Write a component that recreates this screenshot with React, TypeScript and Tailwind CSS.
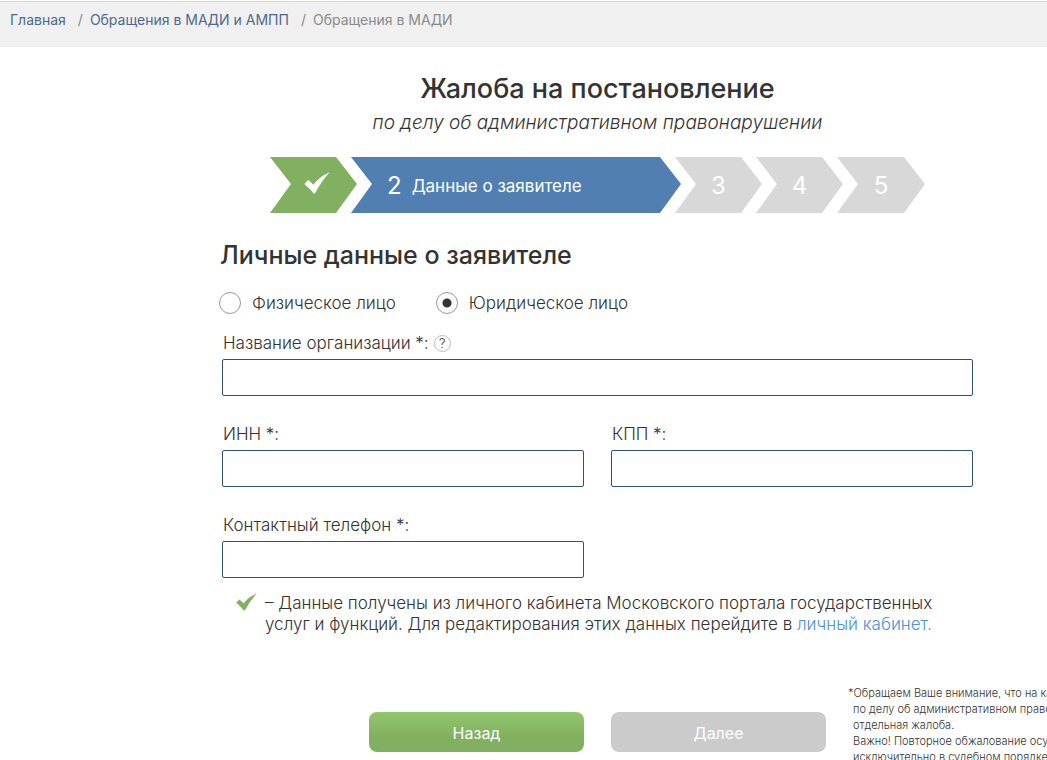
import { useState } from "react";
import type { ReactNode } from "react";

function CheckMark({ className }: { className: string }) {
  return (
    <svg viewBox="0 0 26 22" className={className} fill="currentColor" aria-hidden="true">
      <path d="M0.300 12 L4 8 Q7 9.800 9.300 12.800 Q15.500 4.500 25.700 0.300 Q17.500 9 11 21.500 L9.600 21.500 Q6 16.500 0.300 12 Z" />
    </svg>
  );
}

function Step({ className, children }: { className: string; children: ReactNode }) {
  return (
    <li
      className={`flex h-14 items-center text-white [clip-path:polygon(0_0,calc(100%_-_21px)_0,100%_48%,calc(100%_-_21px)_100%,0_100%,21px_48%)] ${className}`}
    >
      {children}
    </li>
  );
}

function Field({ id, label, children }: { id: string; label: string; children?: ReactNode }) {
  return (
    <div>
      <div className="flex h-8 items-center gap-[5px] pt-0.5 pl-px">
        <label htmlFor={id} className="text-[17px]">
          {label}
        </label>
        {children}
      </div>
      <input
        id={id}
        type="text"
        className="block h-[37px] w-full rounded-[2px] border border-[#2f5078] bg-white px-3 text-[17px] outline-none"
      />
    </div>
  );
}

function Choice({
  label,
  checked,
  onChange,
}: {
  label: string;
  checked: boolean;
  onChange: () => void;
}) {
  return (
    <label className="flex items-center gap-[11px] text-[17px]">
      <input
        type="radio"
        name="applicant"
        checked={checked}
        onChange={onChange}
        className="size-[22px] appearance-none rounded-full border border-[#999] bg-white checked:bg-[radial-gradient(circle,#333_4px,transparent_5px)]"
      />
      <span className="pt-0.5">{label}</span>
    </label>
  );
}

export default function App() {
  const [kind, setKind] = useState("legal");

  return (
    <div className="h-screen overflow-x-hidden overflow-y-auto bg-white font-['Inter',sans-serif] font-light text-[#333] [scrollbar-width:none]">
      <nav className="mt-px flex h-[46px] border-t border-[#cfd8d5] bg-[#f0f0f0] pt-2 pl-[10px] text-[14px] leading-5 font-normal whitespace-nowrap">
        <a href="#home" className="text-[#4c698e]">
          Главная
        </a>
        <span className="mr-[7px] ml-3 text-[#8a8a8a]">/</span>
        <a href="#appeals" className="text-[#4c698e]">
          Обращения в МАДИ и АМПП
        </a>
        <span className="mr-[7px] ml-3 text-[#8a8a8a]">/</span>
        <span className="text-[#8a8a8a]">Обращения в МАДИ</span>
      </nav>

      <main className="pt-6">
        <div className="pr-[74px] pl-[222px]">
          <header className="text-center">
            <h1 className="text-[27px] leading-9 font-medium">Жалоба на постановление</h1>
            <p className="mt-1 text-[19px] leading-6 italic">
              по делу об административном правонарушении
            </p>
          </header>

          <ol className="mt-[22px] flex justify-center">
            <Step className="w-[87px] bg-[#82b061] pl-[34px]">
              <CheckMark className="mb-1 h-[22px] w-[26px]" />
            </Step>
            <Step className="-ml-[6px] w-[330px] gap-[10px] bg-[#517fb2] pt-0.5 pl-[36px] font-normal">
              <span className="text-[24px]">2</span>
              <span className="pt-0.5 text-[17px]">Данные о заявителе</span>
            </Step>
            <Step className="-ml-[6px] w-[87px] justify-center bg-[#d8d8d8] pt-0.5 text-[24px] font-normal">
              3
            </Step>
            <Step className="-ml-[6px] w-[87px] justify-center bg-[#d8d8d8] pt-0.5 text-[24px] font-normal">
              4
            </Step>
            <Step className="-ml-[6px] w-[88px] justify-center bg-[#d8d8d8] pt-0.5 text-[24px] font-normal">
              5
            </Step>
          </ol>

          <h2 className="mt-6 -ml-0.5 text-[25px] leading-9 font-medium">
            Личные данные о заявителе
          </h2>

          <div className="mt-4 -ml-[3px] flex gap-10">
            <Choice
              label="Физическое лицо"
              checked={kind === "person"}
              onChange={() => setKind("person")}
            />
            <Choice
              label="Юридическое лицо"
              checked={kind === "legal"}
              onChange={() => setKind("legal")}
            />
          </div>

          <div className="mt-[10px] flex flex-col gap-[22px]">
            <Field id="org" label="Название организации *:">
              <button
                type="button"
                className="flex size-[17px] items-center justify-center rounded-full border border-[#bbb] text-[13px] leading-none"
              >
                ?
              </button>
            </Field>
            <div className="grid grid-cols-2 gap-x-[27px] gap-y-[22px]">
              <Field id="inn" label="ИНН *:" />
              <Field id="kpp" label="КПП *:" />
              <Field id="phone" label="Контактный телефон *:" />
            </div>
          </div>

          <div className="mt-[15px] flex gap-2 pl-[14px] text-[17px] leading-[21px]">
            <CheckMark className="h-[18px] w-[21px] shrink-0 text-[#82b061]" />
            <p className="whitespace-nowrap">
              – Данные получены из личного кабинета Московского портала государственных
              <br />
              услуг и функций. Для редактирования этих данных перейдите в{" "}
              <a href="#cabinet" className="text-[#4a90e2]">
                личный кабинет.
              </a>
            </p>
          </div>
        </div>

        <div className="mt-[50px] flex pl-[369px]">
          <div className="flex shrink-0 gap-[27px] pt-[27px] text-[16px] font-normal text-white">
            <button
              type="button"
              className="h-10 w-[215px] rounded-lg bg-linear-to-b from-[#92c76d] to-[#82b061] to-60% pt-0.5"
            >
              Назад
            </button>
            <button type="button" className="h-10 w-[215px] rounded-lg bg-[#cbcbcb] pt-0.5">
              Далее
            </button>
          </div>
          <aside className="ml-[27px] text-[11px] leading-4 whitespace-nowrap">
            <p>
              <span className="-ml-[5px]">*</span>Обращаем Ваше внимание, что на каждое
              <br />
              по делу об административном правонарушении
              <br />
              отдельная жалоба.
            </p>
            <p>
              Важно! Повторное обжалование осуществляется
              <br />
              исключительно в судебном порядке.
            </p>
          </aside>
        </div>
      </main>
    </div>
  );
}
